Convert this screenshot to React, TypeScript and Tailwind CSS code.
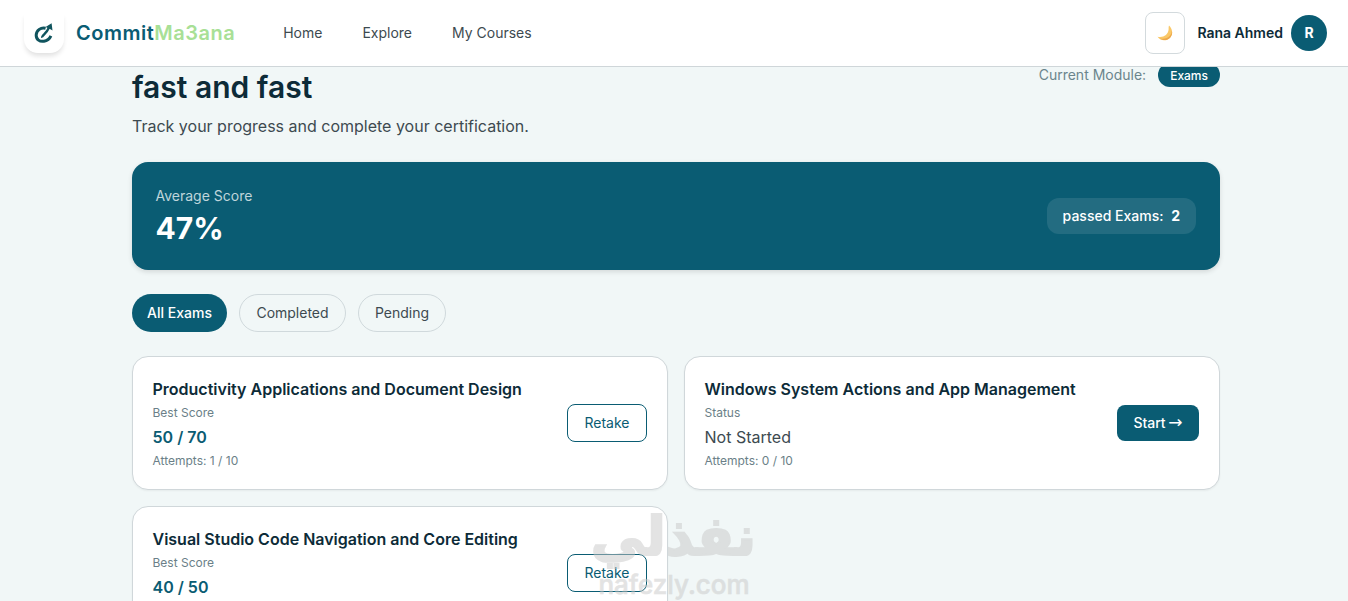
import React from 'react';

type Exam = {
  title: string;
  score?: string;
  attempts: number;
};

const exams: Exam[] = [
  { title: 'Productivity Applications and Document Design', score: '50 / 70', attempts: 1 },
  { title: 'Windows System Actions and App Management', attempts: 0 },
  { title: 'Visual Studio Code Navigation and Core Editing', score: '40 / 50', attempts: 1 },
];

function Logo() {
  return (
    <div className="flex h-10 w-10 items-center justify-center rounded-b-[14px] bg-white shadow-[0_4px_5px_-1px_rgba(0,0,0,0.12)]">
      <svg width="20" height="20" viewBox="0 0 20 20" fill="none">
        <path
          d="M11.6 5.2C7 4 2.4 7.2 2.2 12c-.1 4.600 3.600 6.900 7.700 6.200 3.200-.5 5.700-2.400 7-5.400"
          stroke="#10545e"
          strokeWidth="3"
        />
        <path d="M8.200 14.600C7.300 12.600 12.400 11 15 4.500" stroke="#10545e" strokeWidth="2.300" />
        <path d="M11.600 4 17.600.2l.9 7.300-2.500-1.500z" fill="#10545e" />
      </svg>
    </div>
  );
}

function Moon() {
  return (
    <svg width="18" height="18" viewBox="0 0 18 18">
      <path
        d="M13 1.4c3.5 3.4 4.3 8.4 1.2 12C10.7 17.400 4.700 17.300 1.500 12.700c5.600 1.300 10.800-1.900 11.100-7.200.1-1.700-.1-2.900.4-4.100z"
        fill="#fac868"
      />
      <path d="M15.900 6.500c.7 2.600.1 5.200-1.700 7.200-2.900 3-7.500 3.100-10.600.6 4 1.300 7.700.2 10-2.200 1.600-1.700 2.200-3.600 2.300-5.600z" fill="#eda84b" />
    </svg>
  );
}

function Navbar() {
  return (
    <header className="relative z-10 flex h-[67px] items-center justify-between border-b border-[#cfd6d9] bg-white pl-6 pr-[21px]">
      <div className="flex items-center">
        <Logo />
        <span className="ml-3 text-xl font-semibold tracking-[0.5px] text-[#0a5c73]">
          Commit<span className="text-[#a8e096]">Ma3ana</span>
        </span>
        <nav className="ml-12 flex gap-10 text-sm text-[#3d4a50]">
          <a href="#">Home</a>
          <a href="#">Explore</a>
          <a href="#">My Courses</a>
        </nav>
      </div>
      <div className="flex items-center">
        <button className="flex h-[42px] w-10 items-center justify-center rounded-lg border border-[#d3dadd]">
          <Moon />
        </button>
        <span className="ml-3 text-sm font-semibold text-[#0d2b38]">Rana Ahmed</span>
        <div className="ml-2 flex h-9 w-9 items-center justify-center rounded-full bg-[#0a5c73] text-sm font-bold text-white">
          R
        </div>
      </div>
    </header>
  );
}

function ExamCard({ exam }: { exam: Exam }) {
  return (
    <div className="flex items-center justify-between rounded-2xl border border-[#d0d7da] bg-white py-5 pl-[19.5px] pr-5 shadow-[0_1px_2px_rgba(0,0,0,0.05)]">
      <div>
        <h3 className="font-semibold text-[#0d2b38]">{exam.title}</h3>
        <p className="mt-1 text-xs text-[#6b7f88]">{exam.score ? 'Best Score' : 'Status'}</p>
        {exam.score ? (
          <p className="mt-1 font-semibold text-[#0a5c73]">{exam.score}</p>
        ) : (
          <p className="mt-1 text-[#3d4a50]">Not Started</p>
        )}
        <p className="mt-1 text-xs text-[#6b7f88]">Attempts: {exam.attempts} / 10</p>
      </div>
      {exam.score ? (
        <button className="w-20 rounded-lg border border-[#0a5c73] py-2 text-sm text-[#0a5c73]">Retake</button>
      ) : (
        <button className="h-9 w-[82px] rounded-lg bg-[#0a5c73] text-sm font-medium whitespace-nowrap text-white">
          Start <span className="-ml-px font-['DejaVu_Sans',sans-serif] text-[17px] leading-none font-normal">→</span>
        </button>
      )}
    </div>
  );
}

export default function App() {
  return (
    <div className="relative h-[601px] overflow-hidden bg-[#f1f7f7] font-['Inter',sans-serif]">
      <Navbar />
      <main className="-mt-1 ml-[132px] w-[1088px]">
        <div className="flex items-start justify-between">
          <div className="pt-1.5">
            <h1 className="text-3xl font-semibold text-[#0d2b38]">fast and fast</h1>
            <p className="mt-[9px] text-[#3d4a50]">Track your progress and complete your certification.</p>
          </div>
          <div className="flex items-center gap-3">
            <span className="text-sm text-[#6b858c]">Current Module:</span>
            <span className="rounded-full bg-[#0a5c73] px-3 pt-[5px] pb-[3px] text-xs font-medium text-white">Exams</span>
          </div>
        </div>

        <section className="mt-6 flex h-[108px] items-center justify-between rounded-2xl bg-[#0a5c73] pl-[23.5px] pr-6 shadow-[0_2px_5px_rgba(0,0,0,0.12)]">
          <div>
            <p className="text-sm text-[#bfd5db]">Average Score</p>
            <p className="mt-1 text-3xl font-bold text-white">47%</p>
          </div>
          <div className="rounded-xl bg-white/10 px-4 py-2 text-sm font-medium text-white">
            passed Exams: <span className="ml-1 font-bold">2</span>
          </div>
        </section>

        <div className="mt-6 flex gap-3 text-sm">
          <button className="h-[38px] w-[95px] rounded-full bg-[#0a5c73] font-medium text-white">
            All Exams
          </button>
          <button className="w-[107px] rounded-full border border-[#d0d9dc] py-2 text-[#3d4a50]">Completed</button>
          <button className="w-[88px] rounded-full border border-[#d0d9dc] py-2 text-[#3d4a50]">Pending</button>
        </div>

        <div className="mt-6 grid grid-cols-2 gap-4">
          {exams.map((exam) => (
            <ExamCard key={exam.title} exam={exam} />
          ))}
        </div>
      </main>

      {/* watermark */}
      <div className="pointer-events-none absolute left-[592px] top-[502px] z-20 w-[164px] text-center text-[#c8c8c8] opacity-50">
        <p
          dir="rtl"
          lang="ar"
          className="font-['DejaVu_Sans',sans-serif] text-[54px] font-bold leading-[70px] whitespace-nowrap [-webkit-text-stroke:2px_#c8c8c8] [stroke-linejoin:round]"
        >
          نفذلي
        </p>
        <p className="text-[26px] font-medium leading-[26px] [-webkit-text-stroke:0.6px_#c8c8c8]">nafezly.com</p>
      </div>
    </div>
  );
}
